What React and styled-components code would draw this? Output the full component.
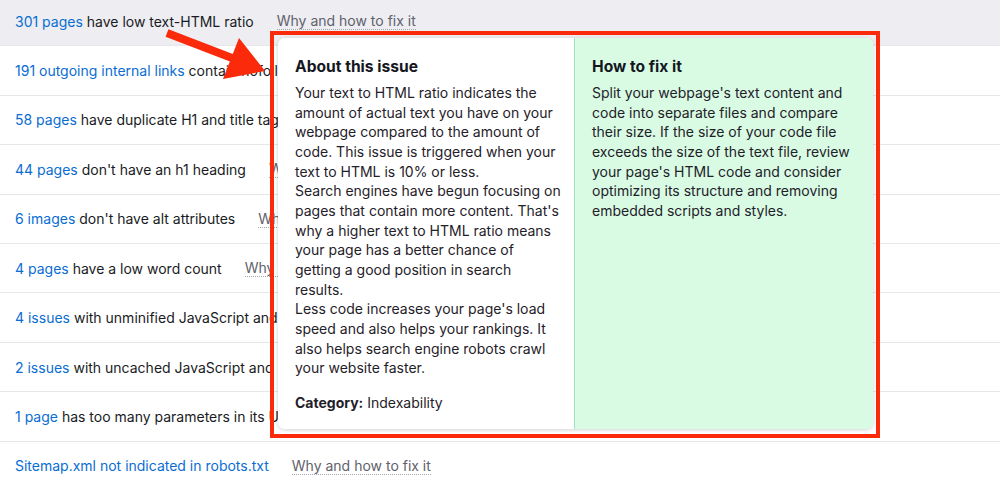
import React from "react";
import styled, { createGlobalStyle } from "styled-components";

const GlobalStyle = createGlobalStyle`
  html, body {
    margin: 0;
    padding: 0;
    background: #fff;
  }
  body {
    font-family: Inter, "Noto Sans", Arial, sans-serif;
    color: #191b23;
    -webkit-font-smoothing: antialiased;
  }
`;

const Page = styled.div`
  position: relative;
  width: 1000px;
  height: 484px;
  overflow: hidden;
`;

const List = styled.div`
  margin-top: -3.2px;
  display: flex;
  flex-direction: column;
`;

const Row = styled.div`
  display: flex;
  align-items: center;
  height: 48.45px;
  padding-left: 15px;
  border-bottom: 1px solid #e7e7eb;
  background: ${({ active }) => (active ? "#ededf2" : "#fff")};
  font-size: 14px;
  white-space: nowrap;
`;

const Label = styled.span`
  white-space: pre;
`;

const Count = styled.span`
  color: #0a6dd2;
`;

const FixLink = styled.span`
  margin-left: 23px;
  color: #5f616b;
  border-bottom: 1px dotted #a4a6ae;
  line-height: 17px;
`;

const Frame = styled.div`
  position: absolute;
  left: 270px;
  top: 31px;
  width: 595px;
  height: 391px;
  border: 4px solid #fa2a0a;
  padding: 3px 3px 5px 4px;
  box-sizing: content-box;
  display: flex;
`;

const Card = styled.div`
  flex: 1;
  display: grid;
  grid-template-columns: 296px 1fr;
  border-radius: 7px;
  overflow: hidden;
  background: #fff;
  box-shadow: 0 1px 4px rgba(0, 0, 0, 0.18);
`;

const Column = styled.div`
  padding: 19px 12px 17px 17px;
  background: ${({ tint }) => (tint ? "#d9fbe4" : "#fff")};
  border-left: ${({ tint }) => (tint ? "1px solid #9fe3c4" : "none")};
  display: flex;
  flex-direction: column;
`;

const Heading = styled.div`
  font-size: 15.6px;
  font-weight: 700;
  line-height: 20px;
  margin-bottom: 6px;
  color: #15171e;
`;

const Text = styled.p`
  margin: 0;
  font-size: 14px;
  line-height: 19.65px;
  color: #1f2129;
`;

const Category = styled.p`
  margin: 15.5px 0 0;
  font-size: 14px;
  line-height: 19.65px;
  color: #1f2129;

  b {
    font-weight: 700;
  }
`;

const Arrow = styled.svg`
  position: absolute;
  left: 160px;
  top: 22px;
`;

const rows = [
  ["301 pages", " have low text-HTML ratio"],
  ["191 outgoing internal links", " contain nofollow attributes"],
  ["58 pages", " have duplicate H1 and title tags"],
  ["44 pages", " don't have an h1 heading"],
  ["6 images", " don't have alt attributes"],
  ["4 pages", " have a low word count"],
  ["4 issues", " with unminified JavaScript and CSS files"],
  ["2 issues", " with uncached JavaScript and CSS files"],
  ["1 page", " has too many parameters in its URLs"],
  ["Sitemap.xml not indicated in robots.txt", ""],
];

export default function App() {
  return (
    <Page>
      <GlobalStyle />
      <List>
        {rows.map(([count, rest], i) => (
          <Row key={i} active={i === 0}>
            <Label>
              <Count>{count}</Count>
              {rest}
            </Label>
            <FixLink>Why and how to fix it</FixLink>
          </Row>
        ))}
      </List>

      <Frame>
        <Card>
          <Column>
            <Heading>About this issue</Heading>
            <Text>
              Your text to HTML ratio indicates the amount of actual text you
              have on your webpage compared to the amount of code. This issue is
              triggered when your text to HTML is 10% or less.
            </Text>
            <Text>
              Search engines have begun focusing on pages that contain more
              content. That's why a higher text to HTML ratio means your page
              has a better chance of getting a good position in search results.
            </Text>
            <Text>
              Less code increases your page's load speed and also helps your
              rankings. It also helps search engine robots crawl your website
              faster.
            </Text>
            <Category>
              <b>Category:</b> Indexability
            </Category>
          </Column>
          <Column tint>
            <Heading>How to fix it</Heading>
            <Text>
              Split your webpage's text content and code into separate files and
              compare their size. If the size of your code file exceeds the size
              of the text file, review your page's HTML code and consider
              optimizing its structure and removing embedded scripts and styles.
            </Text>
          </Column>
        </Card>
      </Frame>

      <Arrow width="115" height="65" viewBox="0 0 115 65">
        <line x1="7" y1="11" x2="72" y2="36" stroke="#fa2a0a" strokeWidth="8" />
        <polygon points="105,49 79,16 63,57" fill="#fa2a0a" />
      </Arrow>
    </Page>
  );
}
